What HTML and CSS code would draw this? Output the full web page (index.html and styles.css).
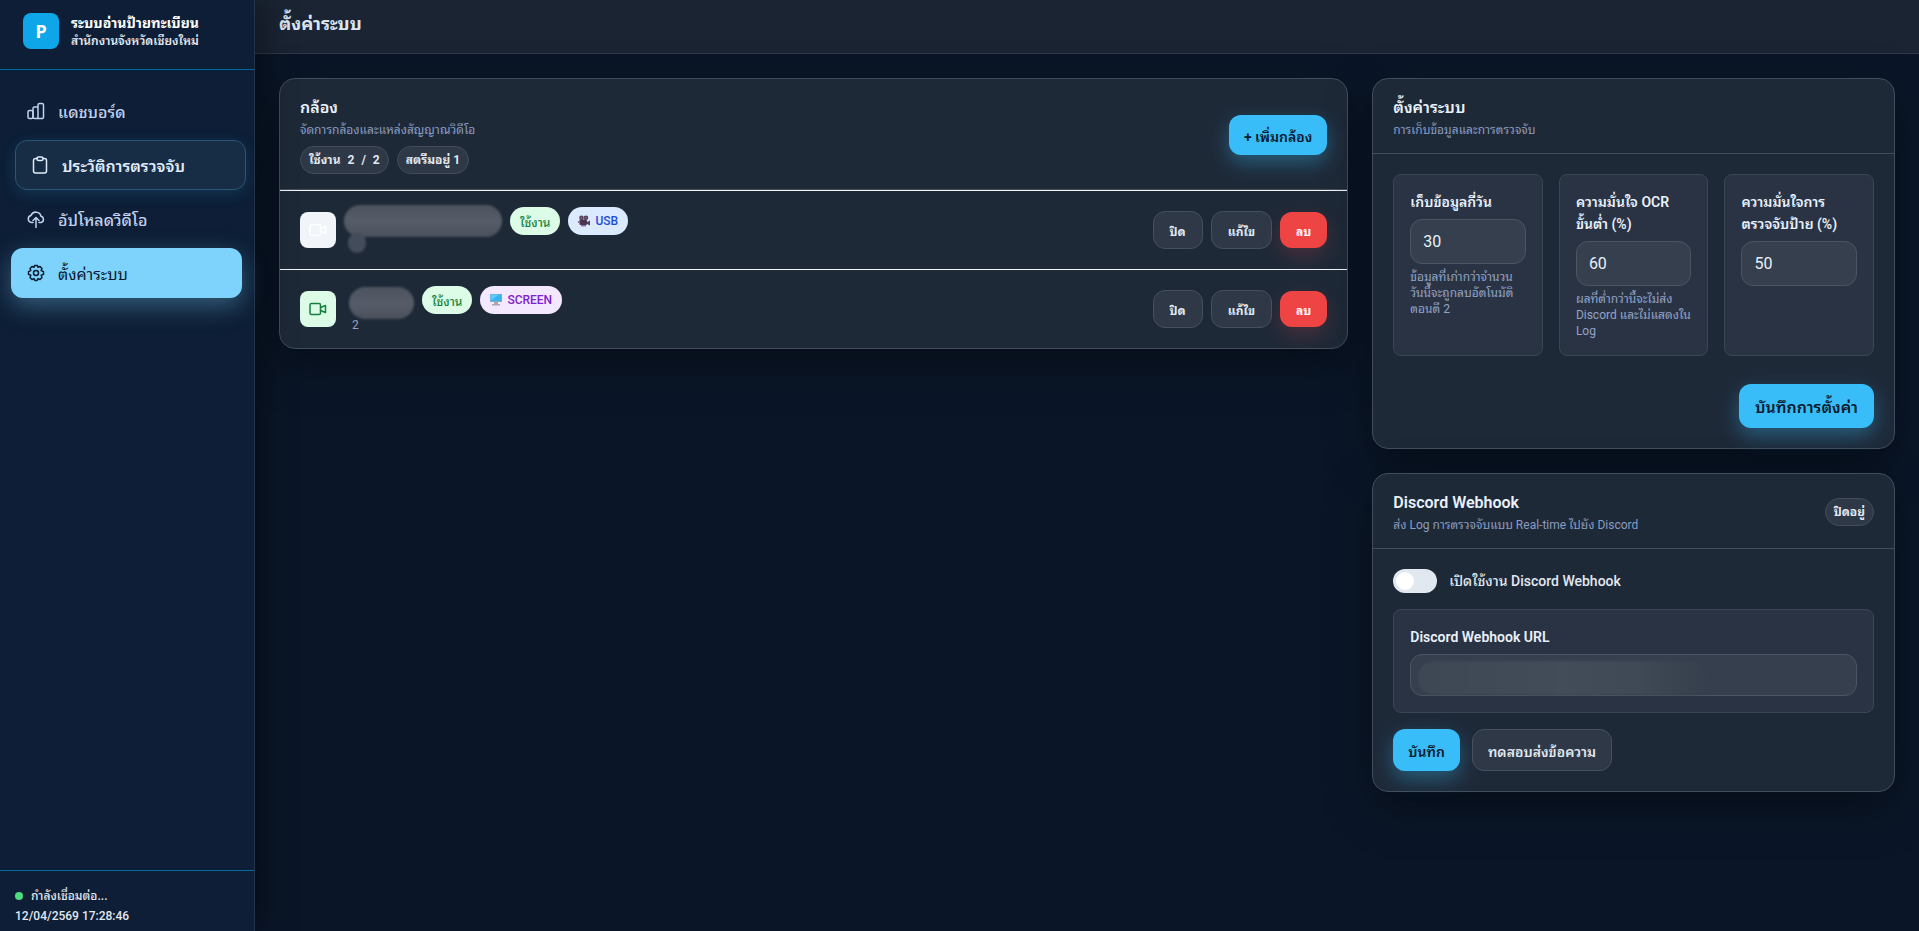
FILE: index.html
```html
<!DOCTYPE html>
<html lang="th">
<head>
  <meta charset="UTF-8">
  <meta name="viewport" content="width=device-width, initial-scale=1.0">
  <title>ตั้งค่าระบบ</title>
  <link rel="stylesheet" href="styles.css">
</head>
<body>
  <aside class="sidebar">
    <div class="brand">
      <div class="brand-logo">P</div>
      <div>
        <div class="brand-name">ระบบอ่านป้ายทะเบียน</div>
        <div class="brand-sub">สำนักงานจังหวัดเชียงใหม่</div>
      </div>
    </div>

    <nav class="nav">
      <a href="#dashboard" class="nav-link">
        <svg class="icon" viewBox="0 0 18 18"><rect x="1" y="8.5" width="5" height="8" rx="1.5"/><path d="M6 10V6.500a1.500 1.500 0 0 1 1.500-1.500H11M6 10v5a1.500 1.500 0 0 0 1.500 1.500h7A1.500 1.500 0 0 0 16.500 15V3A1.500 1.500 0 0 0 15 1.500h-2.500A1.500 1.500 0 0 0 11 3v12a1.500 1.500 0 0 1-1 1.500"/></svg>
        แดชบอร์ด
      </a>
      <a href="#history" class="nav-link hovered">
        <svg class="icon" viewBox="0 0 18 18"><path d="M6 2.500H4.500a2 2 0 0 0-2 2V15a2 2 0 0 0 2 2h9a2 2 0 0 0 2-2V4.500a2 2 0 0 0-2-2H12"/><rect x="6" y="1" width="6" height="3.500" rx="1.500"/></svg>
        ประวัติการตรวจจับ
      </a>
      <a href="#upload" class="nav-link">
        <svg class="icon" viewBox="0 0 18 18"><path d="M6 12.500H4.500A3.500 3.500 0 0 1 4 5.600 5.200 5.200 0 0 1 14 6.300a3.200 3.200 0 0 1 0 6.200h-2M9 17.500V8M6 10.500L9 7.500l3 3"/></svg>
        อัปโหลดวิดีโอ
      </a>
      <a href="#settings" class="nav-link active">
        <svg class="icon" viewBox="0 0 18 18"><path d="M7.600 1.500h2.800l.6 1.800 2-.8 2 2-.9 2 2.400 1.100v2.800l-2.300.9.8 2.200-2 2-2-.9-.9 1.900H7.900L7 14.600l-2 .9-2-2 .8-2.200-2.300-.9V7.600l2.300-1L3 4.500l2-2 2 .8z"/><circle cx="9" cy="9" r="2.500"/></svg>
        ตั้งค่าระบบ
      </a>
    </nav>

    <div class="sidebar-footer">
      <div class="status"><span class="status-dot"></span>กำลังเชื่อมต่อ...</div>
      <div>12/04/2569 17:28:46</div>
    </div>
  </aside>

  <div class="page">
    <header class="topbar">
      <h1>ตั้งค่าระบบ</h1>
    </header>

    <main class="content">
      <section class="card cameras">
        <div class="card-head">
          <div>
            <h2>กล้อง</h2>
            <p class="card-sub">จัดการกล้องและแหล่งสัญญาณวิดีโอ</p>
            <div class="counts">
              <span class="pill"><span>ใช้งาน</span><span>2</span><span>/</span><span>2</span></span>
              <span class="pill">สตรีมอยู่ 1</span>
            </div>
          </div>
          <button type="button" class="btn btn-primary btn-add">+ เพิ่มกล้อง</button>
        </div>

        <div class="camera">
          <div class="camera-icon idle">
            <svg class="icon" viewBox="0 0 18 18"><rect x="1" y="3.500" width="10.500" height="11" rx="1.500"/><path d="M11.500 7.500l5-2v7l-5-2"/></svg>
          </div>
          <div class="camera-info">
            <span class="mask mask-long"></span>
            <span class="tag tag-on">ใช้งาน</span>
            <span class="tag tag-usb">
              <svg class="tag-icon" viewBox="0 0 12 12"><circle cx="3.500" cy="2.800" r="2.300" fill="#55405c"/><circle cx="8" cy="2.800" r="2.300" fill="#55405c"/><rect x="1.500" y="4.500" width="7.500" height="5.500" rx="1" fill="#493551"/><path d="M9 7l3-1.500v5L9 9z" fill="#55405c"/><path d="M0 6h2v2H0zM3 10h5v1.500H3z" fill="#8d7691"/><circle cx="3.500" cy="2.800" r=".8" fill="#8d7691"/><circle cx="8" cy="2.800" r=".8" fill="#8d7691"/></svg>
              USB
            </span>
          </div>
          <div class="camera-actions">
            <button type="button" class="btn btn-ghost btn-small">ปิด</button>
            <button type="button" class="btn btn-ghost btn-small">แก้ไข</button>
            <button type="button" class="btn btn-danger">ลบ</button>
          </div>
        </div>

        <div class="camera">
          <div class="camera-icon live">
            <svg class="icon" viewBox="0 0 18 18"><rect x="1" y="3.500" width="10.500" height="11" rx="1.500"/><path d="M11.500 7.500l5-2v7l-5-2"/></svg>
          </div>
          <div class="camera-info">
            <span class="mask mask-short"></span>
            <span class="camera-source">2</span>
            <span class="tag tag-on">ใช้งาน</span>
            <span class="tag tag-screen">
              <svg class="tag-icon" viewBox="0 0 12 12"><rect width="12" height="8" fill="#8fa9b8"/><rect x=".5" y=".5" width="11" height="6.500" fill="#35b4f0"/><path d="M.5 7V.5H9z" fill="#62c8f7"/><path d="M4 8h4v2H4zM2 10h8v1.500H2z" fill="#a4a9ad"/></svg>
              SCREEN
            </span>
          </div>
          <div class="camera-actions">
            <button type="button" class="btn btn-ghost btn-small">ปิด</button>
            <button type="button" class="btn btn-ghost btn-small">แก้ไข</button>
            <button type="button" class="btn btn-danger">ลบ</button>
          </div>
        </div>
      </section>

      <div class="side">
        <section class="card">
          <div class="card-head">
            <div>
              <h2>ตั้งค่าระบบ</h2>
              <p class="card-sub">การเก็บข้อมูลและการตรวจจับ</p>
            </div>
          </div>
          <form class="card-body">
            <div class="fields">
              <div class="field">
                <label for="days">เก็บข้อมูลกี่วัน</label>
                <input type="text" inputmode="numeric" id="days" value="30">
                <p class="hint">ข้อมูลที่เก่ากว่าจำนวนวันนี้จะถูกลบอัตโนมัติตอนตี 2</p>
              </div>
              <div class="field">
                <label for="ocr">ความมั่นใจ OCR<br>ขั้นต่ำ (%)</label>
                <input type="text" inputmode="numeric" id="ocr" value="60">
                <p class="hint">ผลที่ต่ำกว่านี้จะไม่ส่ง Discord และไม่แสดงใน Log</p>
              </div>
              <div class="field">
                <label for="plate">ความมั่นใจการ<br>ตรวจจับป้าย (%)</label>
                <input type="text" inputmode="numeric" id="plate" value="50">
              </div>
            </div>
            <div class="form-actions">
              <button type="button" class="btn btn-primary btn-large">บันทึกการตั้งค่า</button>
            </div>
          </form>
        </section>

        <section class="card">
          <div class="card-head">
            <div>
              <h2>Discord Webhook</h2>
              <p class="card-sub">ส่ง Log การตรวจจับแบบ Real-time ไปยัง Discord</p>
            </div>
            <span class="pill">ปิดอยู่</span>
          </div>
          <form class="card-body webhook">
            <label class="switch">
              <input type="checkbox">
              เปิดใช้งาน Discord Webhook
            </label>
            <div class="field">
              <label for="webhook">Discord Webhook URL</label>
              <div class="url-box">
                <input type="text" id="webhook">
                <span class="mask mask-url"></span>
              </div>
            </div>
            <div class="webhook-actions">
              <button type="button" class="btn btn-primary">บันทึก</button>
              <button type="button" class="btn btn-ghost">ทดสอบส่งข้อความ</button>
            </div>
          </form>
        </section>
      </div>
    </main>
  </div>
</body>
</html>
```
FILE: styles.css
```css
* {
  box-sizing: border-box;
}

body {
  margin: 0;
  min-height: 100vh;
  display: flex;
  background: #0a1628;
  color: #e2e8f0;
  font-family: Roboto, "Noto Sans Thai Looped", "Noto Sans Thai", "Noto Sans", sans-serif;
  font-size: 14px;
}

h1, h2, p {
  margin: 0;
}

button, input {
  font-family: inherit;
}

.icon {
  width: 18px;
  height: 18px;
  flex: none;
  fill: none;
  stroke: currentColor;
  stroke-width: 1.5;
  stroke-linecap: round;
  stroke-linejoin: round;
}

/* sidebar */
.sidebar {
  width: 255px;
  flex: none;
  display: flex;
  flex-direction: column;
  background: #0d1e36;
  border-right: 1px solid #243349;
  box-shadow: 8px 0 32px rgba(0, 0, 0, 0.4);
  z-index: 1;
}

.brand {
  display: flex;
  align-items: center;
  gap: 12px;
  height: 70px;
  padding: 0 23px 8px;
  border-bottom: 1px solid #0369a1;
}

.brand-logo {
  width: 36px;
  height: 36px;
  border-radius: 8px;
  background: #0ea5e9;
  color: #fff;
  font-family: "Noto Sans", sans-serif;
  font-size: 18px;
  font-weight: 700;
  line-height: 36px;
  text-align: center;
}

.brand-name {
  color: #fff;
  font-size: 14px;
  font-weight: 700;
  line-height: 20px;
}

.brand-sub {
  color: #e2e8f0;
  font-size: 12px;
  font-weight: 600;
  line-height: 16px;
}

.nav {
  flex: 1;
  display: flex;
  flex-direction: column;
  gap: 4px;
  padding: 16px 12px 16px 11px;
}

.nav-link {
  display: flex;
  align-items: center;
  gap: 13px;
  height: 50px;
  padding: 0 16px;
  border-radius: 12px;
  color: #c1d2f0;
  font-size: 16px;
  font-weight: 500;
  text-decoration: none;
}

.nav-link.hovered {
  margin: 0 -4px 0 4px;
  padding: 0 15px;
  background: #172c45;
  border: 1px solid #2a5675;
  box-shadow: 0 4px 16px rgba(56, 189, 248, 0.15);
  color: #e0ecfb;
  font-weight: 600;
}

.nav-link.active {
  background: #7dd3fc;
  box-shadow: 0 8px 24px rgba(125, 211, 252, 0.35);
  color: #0b1a2e;
  font-weight: 400;
}

.sidebar-footer {
  padding: 15px 15px 5px;
  border-top: 1px solid #0369a1;
  font-size: 12px;
  font-weight: 500;
  line-height: 20px;
}

.status {
  display: flex;
  align-items: center;
  gap: 8px;
}

.status-dot {
  width: 8px;
  height: 8px;
  border-radius: 50%;
  background: #4ade80;
}

/* page */
.page {
  flex: 1;
  min-width: 0;
}

.topbar {
  height: 54px;
  padding: 12px 24px;
  background: #1a2433;
  border-bottom: 1px solid #303a48;
}

.topbar h1 {
  color: #dbe6f5;
  font-size: 18px;
  font-weight: 700;
  line-height: 24px;
}

.content {
  display: grid;
  grid-template-columns: repeat(3, minmax(0, 1fr));
  align-items: start;
  gap: 24px;
  padding: 24px;
}

.cameras {
  grid-column: span 2;
}

.side {
  display: flex;
  flex-direction: column;
  gap: 24px;
}

.card {
  background: #1e2938;
  border: 1px solid #424d5b;
  border-radius: 16px;
  box-shadow: 0 16px 48px rgba(0, 0, 0, 0.4);
}

.card-head {
  display: flex;
  align-items: center;
  justify-content: space-between;
  padding: 17px 20px 15px;
  border-bottom: 1px solid #424d5b;
}

.card-head h2 {
  color: #e9f1fb;
  font-size: 16px;
  font-weight: 600;
  line-height: 24px;
}

.card-sub {
  margin-top: 2px;
  color: #8a9cc0;
  font-size: 12px;
  line-height: 16px;
}

.card-body {
  padding: 20px;
}

.counts {
  display: flex;
  gap: 8px;
  margin-top: 8px;
}

.pill {
  display: flex;
  gap: 7px;
  height: 28px;
  padding: 0 8px;
  border: 1px solid #424d5b;
  border-radius: 14px;
  background: #2e3847;
  color: #e2e8f0;
  font-size: 12px;
  font-weight: 700;
  line-height: 26px;
}

/* buttons */
.btn {
  height: 42px;
  padding: 0 15px;
  border: 0;
  border-radius: 12px;
  font-size: 14px;
  font-weight: 600;
  cursor: pointer;
}

.btn-primary {
  background: #38bdf8;
  box-shadow: 0 8px 20px rgba(56, 189, 248, 0.35);
  color: #0b1a2e;
}

.btn-add {
  height: 40px;
}

.btn-large {
  height: 44px;
  padding: 0 16px;
  font-size: 16px;
}

.btn-ghost {
  border: 1px solid #45505e;
  background: #2e3847;
  color: #e2e8f0;
}

.btn-small {
  height: 38px;
  padding: 0 16px;
  font-size: 12px;
  font-weight: 700;
}

.btn-danger {
  height: 36px;
  padding: 0 16px;
  background: #ef4444;
  box-shadow: 0 8px 20px rgba(239, 68, 68, 0.2);
  color: #fff;
  font-size: 12px;
  font-weight: 700;
}

/* camera list */
.camera {
  display: flex;
  align-items: center;
  height: 79px;
  padding: 0 20px;
  border-top: 1px solid #f1f5f9;
}

.camera-icon {
  display: flex;
  align-items: center;
  justify-content: center;
  width: 36px;
  height: 36px;
  border-radius: 8px;
}

.camera-icon.idle {
  background: #f1f5f9;
  color: #fff;
}

.camera-icon.live {
  background: #dcfce7;
  color: #15803d;
}

.camera-info {
  position: relative;
  flex: 1;
  display: flex;
  align-items: center;
  gap: 8px;
  padding: 0 0 18px 8px;
}

.camera-source {
  position: absolute;
  left: 16px;
  top: 33px;
  color: #94a3c4;
  font-size: 12px;
  line-height: 16px;
}

.camera-actions {
  display: flex;
  align-items: center;
  gap: 8px;
}

.tag {
  display: flex;
  align-items: center;
  gap: 5px;
  height: 28px;
  padding: 0 10px;
  border-radius: 14px;
  font-size: 12px;
  font-weight: 500;
}

.tag-on {
  background: #dcfce7;
  color: #15803d;
}

.tag-usb {
  background: #dbeafe;
  color: #1d4ed8;
}

.tag-screen {
  background: #f3e8ff;
  color: #7e22ce;
}

.tag-icon {
  width: 12px;
  height: 12px;
}

/* brushed-out values */
.mask {
  position: relative;
  height: 32px;
  border-radius: 16px;
  background: linear-gradient(#4c535e, #565d68 50%, #4a515c);
  filter: blur(1px);
}

.mask-long {
  width: 158px;
}

.mask-long::after {
  content: "";
  position: absolute;
  left: 4px;
  top: 28px;
  width: 18px;
  height: 20px;
  border-radius: 9px;
  background: #434c5a;
}

.mask-short {
  width: 65px;
  margin-left: 5px;
  top: 3px;
}

/* forms */
.fields {
  display: grid;
  grid-template-columns: repeat(3, minmax(0, 1fr));
  gap: 16px;
}

.field {
  padding: 16px;
  border: 1px solid #3b4655;
  border-radius: 8px;
  background: #2a3344;
}

.field label {
  display: block;
  margin-bottom: 6px;
  color: #e9f1fb;
  font-size: 14px;
  font-weight: 600;
  line-height: 22px;
}

.field input {
  display: block;
  width: 100%;
  height: 45px;
  padding: 0 12px;
  border: 1px solid #4b5562;
  border-radius: 12px;
  background: #353f4d;
  color: #e9f1fb;
  font-size: 16px;
}

.hint {
  margin-top: 5px;
  color: #94a3c4;
  font-size: 12px;
  line-height: 16px;
}

.form-actions {
  display: flex;
  justify-content: flex-end;
  margin-top: 28px;
}

.webhook {
  display: flex;
  flex-direction: column;
  gap: 16px;
}

.switch {
  display: flex;
  align-items: center;
  gap: 12px;
  font-size: 14px;
  font-weight: 500;
  line-height: 24px;
}

.switch input {
  appearance: none;
  width: 44px;
  height: 24px;
  margin: 0;
  padding: 3px;
  border-radius: 12px;
  background: #e2e8f0;
}

.switch input::before {
  content: "";
  display: block;
  width: 18px;
  height: 18px;
  border-radius: 50%;
  background: #fff;
}

.url-box {
  position: relative;
}

.field .url-box input {
  height: 42px;
}

.mask-url {
  position: absolute;
  left: 8px;
  top: 7px;
  width: 65%;
  height: 34px;
  background: linear-gradient(90deg, #3e4855, #434d59 50%, #404a56 75%, #353f4d);
}

.webhook-actions {
  display: flex;
  gap: 12px;
}
```
